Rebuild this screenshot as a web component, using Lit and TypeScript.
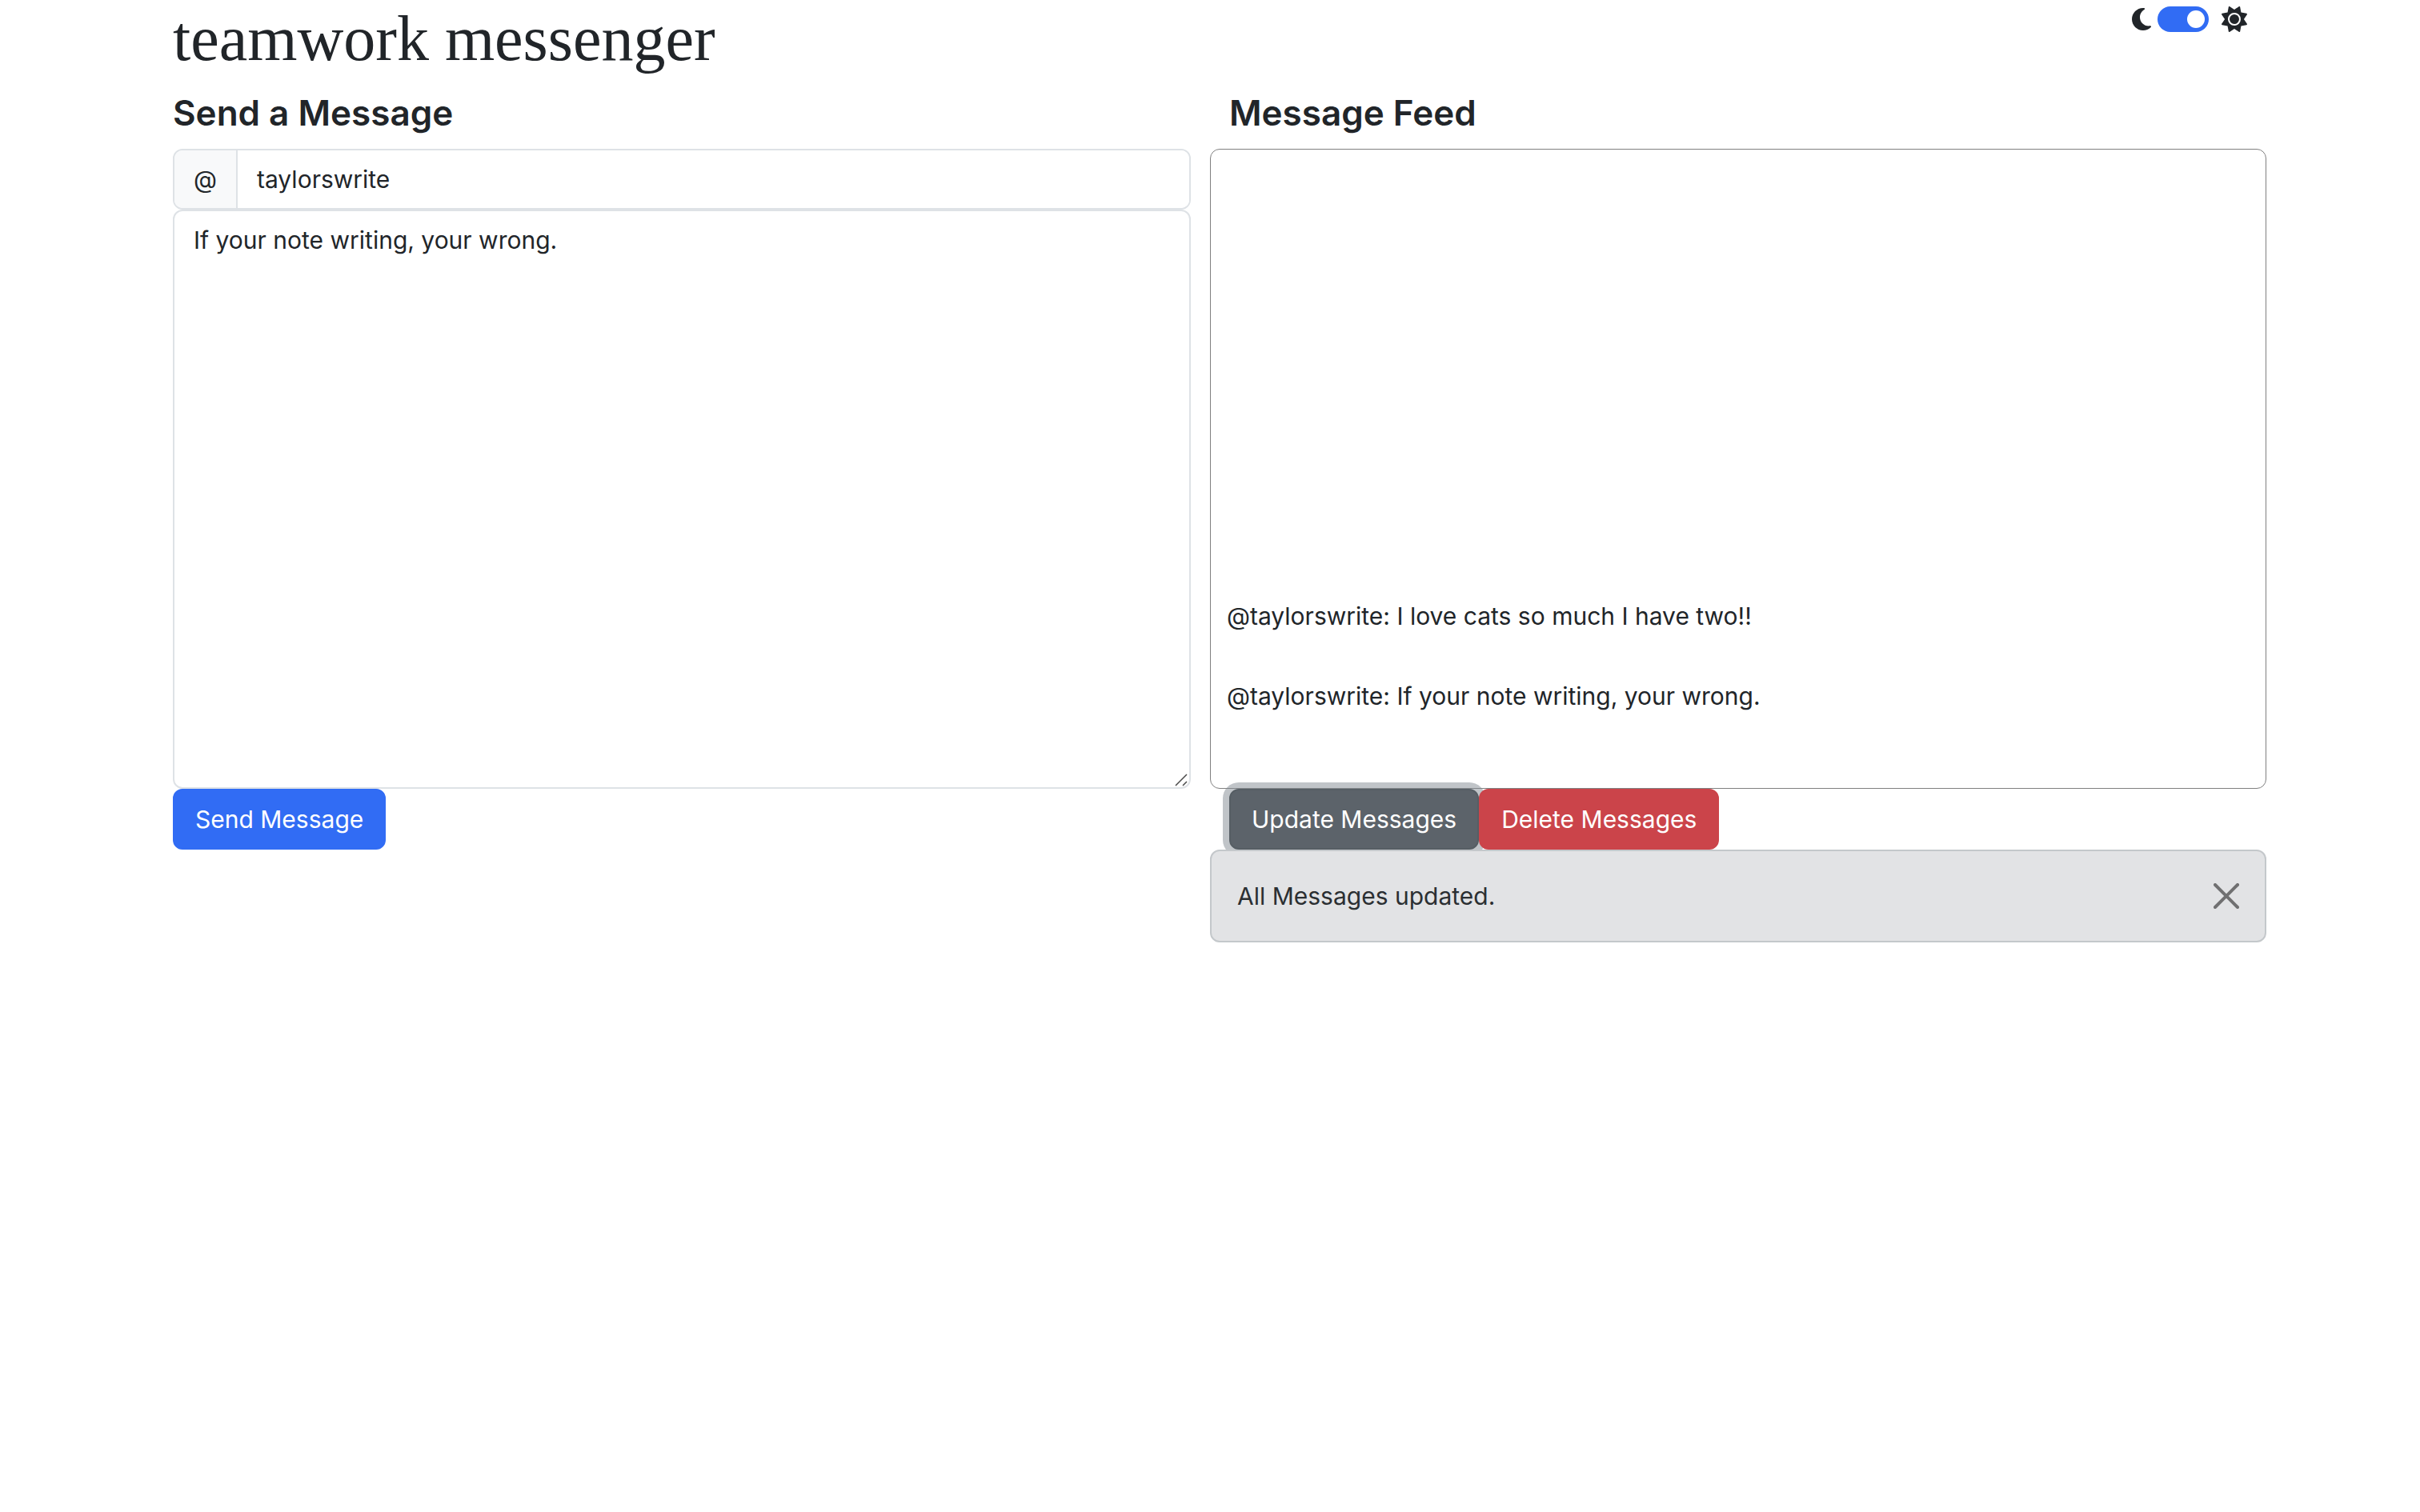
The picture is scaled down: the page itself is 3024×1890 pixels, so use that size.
import { LitElement, html, css, svg } from "lit";
import { customElement, state } from "lit/decorators.js";

interface Message {
  user: string;
  text: string;
}

const moonIcon = svg`<path fill="currentColor" d="M223.5 32C100 32 0 132.3 0 256S100 480 223.5 480c60.6 0 115.5-24.2 155.8-63.4c5-4.9 6.3-12.5 3.1-18.7s-10.1-9.7-17-8.5c-9.8 1.7-19.8 2.6-30.1 2.6c-96.9 0-175.5-78.8-175.5-176c0-65.8 36-123.1 89.3-153.3c6.1-3.5 9.2-10.5 7.7-17.3s-7.3-11.9-14.3-12.5c-6.3-.5-12.6-.8-19-.8z"/>`;

const sunIcon = svg`<path fill="currentColor" d="M361.5 1.2c5 2.1 8.6 6.6 9.6 11.9L391 121l107.9 19.8c5.3 1 9.8 4.6 11.9 9.6s1.5 10.7-1.6 15.2L446.9 256l62.3 90.3c3.1 4.5 3.7 10.2 1.6 15.2s-6.6 8.6-11.9 9.6L391 391 371.1 498.9c-1 5.3-4.6 9.8-9.6 11.9s-10.7 1.5-15.2-1.6L256 446.9l-90.3 62.3c-4.5 3.1-10.2 3.7-15.2 1.6s-8.6-6.6-9.6-11.9L121 391 13.1 371.1c-5.3-1-9.8-4.6-11.9-9.6s-1.5-10.7 1.6-15.2L65.1 256 2.8 165.7c-3.1-4.5-3.7-10.2-1.6-15.2s6.6-8.6 11.9-9.6L121 121 140.9 13.1c1-5.3 4.6-9.8 9.6-11.9s10.7-1.5 15.2 1.6L256 65.1 346.3 2.8c4.5-3.1 10.2-3.7 15.2-1.6zM160 256a96 96 0 1 1 192 0 96 96 0 1 1 -192 0zm224 0a128 128 0 1 0 -256 0 128 128 0 1 0 256 0z"/>`;

const closeIcon = svg`<path fill="currentColor" d="M.293.293a1 1 0 0 1 1.414 0L8 6.586 14.293.293a1 1 0 1 1 1.414 1.414L9.414 8l6.293 6.293a1 1 0 0 1-1.414 1.414L8 9.414l-6.293 6.293a1 1 0 0 1-1.414-1.414L6.586 8 .293 1.707a1 1 0 0 1 0-1.414z"/>`;

@customElement("app-root")
export class AppRoot extends LitElement {
  static styles = css`
    :host {
      display: block;
      min-height: 100vh;
      background: #fff;
      color: #212529;
      font-family: Inter, "Liberation Sans", sans-serif;
      font-size: 30px;
      line-height: 48px;
    }
    *, *::before, *::after { box-sizing: border-box; }
    h1, h2, p { margin: 0; }
    button, input, textarea { font: inherit; color: inherit; margin: 0; }

    .container {
      width: 100%;
      max-width: 2640px;
      margin: 0 auto;
    }
    .header {
      display: flex;
      justify-content: space-between;
      align-items: flex-start;
      padding: 0 24px;
    }
    .title {
      font-family: "Liberation Serif", serif;
      font-size: 80px;
      font-weight: 400;
      line-height: 96px;
      padding-bottom: 16px;
    }
    .theme {
      display: flex;
      align-items: center;
      height: 48px;
    }
    .moon { width: 24px; height: 32px; margin-right: 8px; }
    .sun { width: 32px; height: 32px; margin-left: 16px; }
    .switch {
      appearance: none;
      display: flex;
      align-items: center;
      width: 64px;
      height: 32px;
      padding: 5px;
      border-radius: 16px;
      background: #adb5bd;
    }
    .switch::before {
      content: "";
      width: 22px;
      height: 22px;
      border-radius: 50%;
      background: #fff;
    }
    .switch:checked {
      justify-content: flex-end;
      background: #316cf4;
    }

    .columns {
      display: grid;
      grid-template-columns: 1fr 1fr;
    }
    .compose {
      display: flex;
      flex-direction: column;
      align-items: stretch;
      padding: 0 24px;
    }
    .heading {
      font-size: 44px;
      font-weight: 600;
      line-height: 58px;
      padding-bottom: 16px;
    }
    .feed .heading, .actions { padding-left: 24px; }

    .handle {
      display: flex;
      height: 76px;
      border: 2px solid #dee2e6;
      border-radius: 12px;
      overflow: hidden;
    }
    .at {
      flex: 0 0 79px;
      display: flex;
      align-items: center;
      justify-content: center;
      background: #f8f9fa;
      border-right: 2px solid #dee2e6;
    }
    .name {
      flex: 1;
      min-width: 0;
      border: 0;
      outline: 0;
      padding: 0 24px;
      background: #fff;
    }
    .note { position: relative; display: flex; }
    .body {
      flex: 1;
      height: 724px;
      padding: 12px 24px;
      border: 2px solid #dee2e6;
      border-radius: 12px;
      outline: 0;
      background: #fff;
      resize: none;
    }
    .grip {
      position: absolute;
      right: 4px;
      bottom: 3px;
      width: 16px;
      height: 16px;
    }

    .btn {
      height: 76px;
      padding: 0 26px;
      border: 2px solid transparent;
      border-radius: 12px;
      color: #fff;
      white-space: nowrap;
    }
    .send { align-self: flex-start; background: #316cf4; border-color: #316cf4; }
    .refresh {
      background: #5c636a;
      border-color: #565e64;
      box-shadow: 0 0 0 8px rgba(130, 138, 145, 0.5);
    }
    .delete { background: #cb444a; border-color: #cb444a; position: relative; }

    .list {
      display: flex;
      flex-direction: column;
      justify-content: flex-end;
      gap: 52px;
      height: 800px;
      padding: 20px 20px 91px;
      border: 1px solid #808080;
      border-radius: 12px;
      overflow: hidden;
    }
    .actions { display: flex; }
    .alert {
      position: relative;
      display: flex;
      align-items: center;
      justify-content: space-between;
      padding: 32px;
      border: 2px solid #c4c8cb;
      border-radius: 12px;
      background: #e2e3e5;
      color: #2b2f32;
    }
    .close {
      display: flex;
      padding: 0;
      border: 0;
      background: none;
      color: #000;
      opacity: 0.5;
    }
    .cross { width: 32px; height: 32px; }
  `;

  @state() private light = true;
  @state() private notice = "All Messages updated.";
  @state() private messages: Message[] = [
    { user: "taylorswrite", text: "I love cats so much I have two!!" },
    { user: "taylorswrite", text: "If your note writing, your wrong." },
  ];

  private onToggle = (e: Event) => {
    this.light = (e.target as HTMLInputElement).checked;
  };

  private onSend = () => {
    const root = this.renderRoot;
    const user = (root.querySelector(".name") as HTMLInputElement).value;
    const text = (root.querySelector(".body") as HTMLTextAreaElement).value;
    this.messages = [...this.messages, { user, text }];
  };

  private onRefresh = () => {
    this.notice = "All Messages updated.";
  };

  private onDelete = () => {
    this.messages = [];
  };

  private onDismiss = () => {
    this.notice = "";
  };

  render() {
    return html`
      <div class="container">
        <header class="header">
          <h1 class="title">teamwork messenger</h1>
          <div class="theme">
            <svg class="moon" viewBox="0 0 384 512" aria-hidden="true">${moonIcon}</svg>
            <input class="switch" type="checkbox" role="switch" aria-label="Light mode"
              .checked=${this.light} @change=${this.onToggle} />
            <svg class="sun" viewBox="0 0 512 512" aria-hidden="true">${sunIcon}</svg>
          </div>
        </header>
        <main class="columns">
          <section class="compose">
            <h2 class="heading">Send a Message</h2>
            <div class="handle">
              <label class="at" for="name">@</label>
              <input class="name" id="name" type="text" aria-label="Username" value="taylorswrite" />
            </div>
            <div class="note">
              <textarea class="body" aria-label="Message" spellcheck="false"
                .value=${"If your note writing, your wrong."}></textarea>
              <svg class="grip" viewBox="0 0 16 16" aria-hidden="true">
                <path d="M1 15 15 1M10 15l5-5" stroke="#4a4a4a" stroke-width="1.5" fill="none" />
              </svg>
            </div>
            <button class="btn send" type="button" @click=${this.onSend}>Send Message</button>
          </section>
          <section class="feed">
            <h2 class="heading">Message Feed</h2>
            <div class="list">
              ${this.messages.map((m) => html`<p>@${m.user}: ${m.text}</p>`)}
            </div>
            <div class="actions">
              <button class="btn refresh" type="button" @click=${this.onRefresh}>Update Messages</button>
              <button class="btn delete" type="button" @click=${this.onDelete}>Delete Messages</button>
            </div>
            ${this.notice
              ? html`<div class="alert" role="alert">
                  <span>${this.notice}</span>
                  <button class="close" type="button" aria-label="Close" @click=${this.onDismiss}>
                    <svg class="cross" viewBox="0 0 16 16" aria-hidden="true">${closeIcon}</svg>
                  </button>
                </div>`
              : ""}
          </section>
        </main>
      </div>
    `;
  }
}
